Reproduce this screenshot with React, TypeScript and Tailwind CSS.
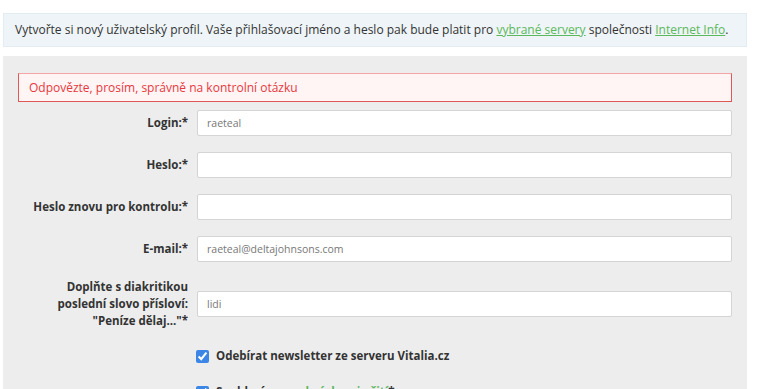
import React from "react";

const rows = [
  { label: "Login:*", value: "raeteal" },
  { label: "Heslo:*", value: "", type: "password" },
  { label: "Heslo znovu pro kontrolu:*", value: "", type: "password" },
  { label: "E-mail:*", value: "raeteal@deltajohnsons.com" },
];

const inputCls =
  "w-[535px] h-[26px] px-[9px] bg-white border border-[#d4d4d4] rounded-[2px] text-[10.5px] text-[#777] outline-none";

const App: React.FC = () => {
  return (
    <div
      className="w-[768px] h-[389px] overflow-hidden bg-white text-[12px] text-[#333]"
      style={{ fontFamily: '"Open Sans", "Liberation Sans", sans-serif' }}
    >
      <div className="w-[744px] ml-[3px] pt-[13px]">
        {/* Info */}
        <div className="h-[34px] flex items-center px-[11px] bg-[#eef4f7] border border-[#e2ecf1] whitespace-nowrap">
          <p>
            Vytvořte si nový uživatelský profil. Vaše přihlašovací jméno a heslo pak bude platit pro{" "}
            <a href="#" className="text-[#5cb85c] underline">vybrané servery</a> společnosti{" "}
            <a href="#" className="text-[#5cb85c] underline">Internet Info</a>.
          </p>
        </div>

        {/* Form */}
        <div className="mt-[9px] bg-[#ededed] px-[15px] pt-[17px] pb-[20px]">
          <div className="h-[29px] flex items-center px-[10px] bg-[#fff5f5] border border-[#e05757] border-t-[#f3a5a5] text-[#e8383d]">
            Odpovězte, prosím, správně na kontrolní otázku
          </div>

          <div className="mt-[8px] flex flex-col gap-[16px]">
            {rows.map((r) => (
              <div key={r.label} className="flex items-center">
                <label className="w-[179px] pr-[9px] text-right text-[11.5px] font-bold whitespace-nowrap">{r.label}</label>
                <input type={r.type ?? "text"} defaultValue={r.value} className={inputCls} />
              </div>
            ))}
            <div className="flex items-center">
              <label className="w-[179px] pr-[9px] text-right text-[11.5px] font-bold leading-[17px] whitespace-nowrap">
                Doplňte s diakritikou
                <br />
                poslední slovo přísloví:
                <br />
                "Peníze dělaj..."*
              </label>
              <input type="text" defaultValue="lidi" className={inputCls} />
            </div>
          </div>

          <div className="ml-[178px] mt-[18px] flex flex-col gap-[18px] text-[11.5px]">
            <label className="h-[18px] flex items-center gap-[7px] font-bold">
              <input type="checkbox" defaultChecked className="w-[13px] h-[13px] accent-[#3b86e6]" />
              Odebírat newsletter ze serveru Vitalia.cz
            </label>
            <label className="h-[18px] flex items-center gap-[7px] font-bold">
              <input type="checkbox" defaultChecked className="w-[13px] h-[13px] accent-[#3b86e6]" />
              <span>
                Souhlasím s <a href="#" className="text-[#5cb85c]">podmínkami užití</a>*
              </span>
            </label>
          </div>
        </div>
      </div>
    </div>
  );
};

export default App;
